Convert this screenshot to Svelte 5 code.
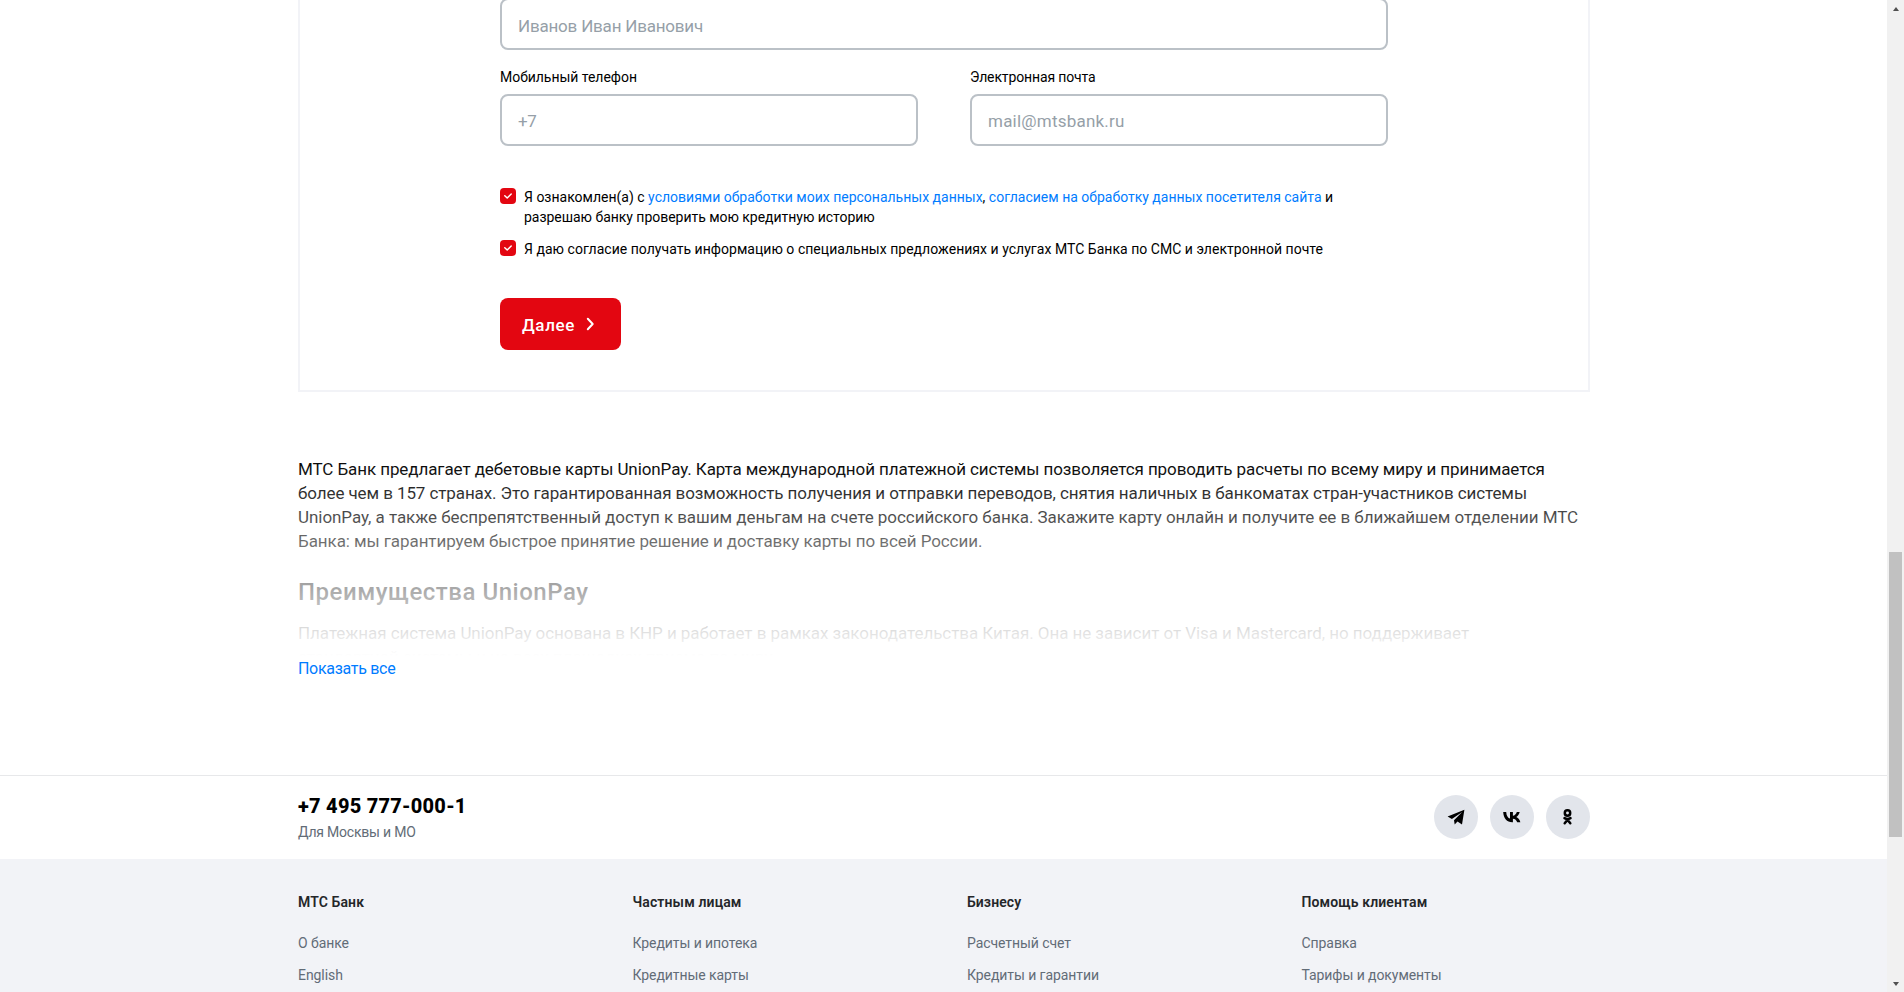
<script>
  const intro = [
    ['МТС Банк предлагает дебетовые карты UnionPay. Карта международной платежной системы позволяется проводить расчеты по всему миру и принимается', -0.087],
    ['более чем в 157 странах. Это гарантированная возможность получения и отправки переводов, снятия наличных в банкоматах стран-участников системы', -0.095],
    ['UnionPay, а также беспрепятственный доступ к вашим деньгам на счете российского банка. Закажите карту онлайн и получите ее в ближайшем отделении МТС', -0.056],
    ['Банка: мы гарантируем быстрое принятие решение и доставку карты по всей России.', -0.078]
  ];
  const details = [
    ['Платежная система UnionPay основана в КНР и работает в рамках законодательства Китая. Она не зависит от Visa и Mastercard, но поддерживает', -0.057],
    ['стандартной системы и на всех площадках приема по миру', -0.1]
  ];
  const columns = [
    { title: 'МТС Банк', links: ['О банке', 'English'] },
    { title: 'Частным лицам', links: ['Кредиты и ипотека', 'Кредитные карты'] },
    { title: 'Бизнесу', links: ['Расчетный счет', 'Кредиты и гарантии'] },
    { title: 'Помощь клиентам', links: ['Справка', 'Тарифы и документы'] }
  ];
</script>

{#snippet checkbox()}
  <span class="box">
    <svg width="16" height="16" viewBox="0 0 16 16"><path d="M4.8 7.8 7.2 10 11.2 6" fill="none" stroke="#fff" stroke-width="1.5" stroke-linecap="round" stroke-linejoin="round" /></svg>
  </span>
{/snippet}

<div class="window">
  <div class="page">
    <form class="card">
      <input class="name" placeholder="Иванов Иван Иванович" />
      <div class="pair">
        <label><span class="cap phone-cap">Мобильный телефон</span><input class="phone" placeholder="+7" /></label>
        <label><span class="cap mail-cap">Электронная почта</span><input class="mail" placeholder="mail@mtsbank.ru" /></label>
      </div>
      <div class="checks">
        <div class="check">
          {@render checkbox()}
          <p>Я ознакомлен(а) с <a href="#terms">условиями обработки моих персональных данных</a>, <a href="#visitor">согласием на обработку данных посетителя сайта</a> и<br /><span class="tight">разрешаю банку проверить мою кредитную историю</span></p>
        </div>
        <div class="check">
          {@render checkbox()}
          <p class="wide">Я даю согласие получать информацию о специальных предложениях и услугах МТС Банка по СМС и электронной почте</p>
        </div>
      </div>
      <button type="button">
        <span>Далее</span>
        <svg width="9" height="14" viewBox="0 0 9 14"><path d="M1.8 1.8 6.7 7 1.8 12.2" fill="none" stroke="#fff" stroke-width="2" stroke-linecap="round" stroke-linejoin="round" /></svg>
      </button>
    </form>

    <section class="seo">
      <div class="fade">
        <p>{#each intro as [line, spacing]}<span class="line" style="letter-spacing: {spacing}px">{line}</span>{/each}</p>
        <h2>Преимущества UnionPay</h2>
        <p>{#each details as [line, spacing]}<span class="line" style="letter-spacing: {spacing}px">{line}</span>{/each}</p>
      </div>
      <a class="more" href="#all">Показать все</a>
    </section>

    <div class="contacts">
      <div class="inner">
        <div>
          <div class="tel">+7 495 777-000-1</div>
          <div class="region">Для Москвы и МО</div>
        </div>
        <div class="social">
          <a href="#telegram" aria-label="Telegram"><svg width="44" height="44" viewBox="0 0 44 44"><path d="M13.6 21.6 30.4 14.7 28 29.5 23.5 26.6 20.7 29.6 20 25.3 28.2 17 17.9 24.1Z" /></svg></a>
          <a href="#vk" aria-label="VK"><svg width="44" height="44" viewBox="0 0 44 44"><path d="M22.3 27.2C16.8 27.2 13.5 23.3 13.2 17H16.2C16.4 21 18.1 23.1 20 23.6V17H22.9V20.8C24.6 20.6 26.2 19 26.8 17H29.7C29.3 19.3 27.7 21.1 26.3 22 27.9 22.7 29.6 24.3 30.4 27.2H27.2C26.6 25.3 25 23.9 22.9 23.7V27.2Z" /></svg></a>
          <a href="#ok" aria-label="OK"><svg width="44" height="44" viewBox="0 0 44 44"><g fill="none" stroke="#000" stroke-width="2.5" stroke-linecap="round" stroke-linejoin="round"><circle cx="21.5" cy="18" r="2.7" /><path d="M18.5 23.1Q21.5 24.9 24.5 23.1M21.5 24.9 18.7 28.3M21.5 24.9 24.3 28.3" /></g></svg></a>
        </div>
      </div>
    </div>

    <footer>
      <nav>
        {#each columns as col}
          <div class="col">
            <h3>{col.title}</h3>
            {#each col.links as link}<a href="#link">{link}</a>{/each}
          </div>
        {/each}
      </nav>
    </footer>
  </div>

  <div class="scrollbar">
    <i class="arrow up"></i>
    <div class="track"><div class="thumb"></div></div>
    <i class="arrow down"></i>
  </div>
</div>

<style>
  :global(body) { margin: 0; overflow: hidden; }
  .window { display: flex; width: 1904px; height: 992px; overflow: hidden; background: #fff; color: #000; font-family: Roboto, 'Liberation Sans', sans-serif; }
  .window * { box-sizing: border-box; }
  a { color: #007cff; text-decoration: none; }
  p, h2, h3 { margin: 0; }
  .page { width: 1887px; height: 992px; overflow: hidden; }
  .card { width: 1292px; height: 394px; margin: -2px 0 0 298px; padding: 0 200px; border: 2px solid #f2f3f7; border-top: 0; }
  input { display: block; width: 100%; height: 52px; padding: 3px 16px 0; border: 2px solid #bbc1c7; border-radius: 8px; background: #fff; font: 17px Roboto, sans-serif; outline: none; }
  input::placeholder { color: #969fa8; opacity: 1; }
  .name { letter-spacing: -0.2px; }
  .phone, .mail { padding-top: 1px; }
  .phone { letter-spacing: -0.5px; }
  .mail { letter-spacing: 0.22px; }
  .pair { display: grid; grid-template-columns: 418px 418px; gap: 52px; margin-top: 17px; }
  .cap { display: block; height: 27px; font-size: 14px; line-height: 20px; }
  .phone-cap { letter-spacing: -0.03px; }
  .mail-cap { letter-spacing: -0.13px; }
  .checks { margin-top: 41px; }
  .check { display: flex; gap: 8px; margin-bottom: 12px; font-size: 14px; line-height: 20px; white-space: nowrap; }
  .box { width: 16px; height: 16px; margin-top: 1px; border-radius: 4px; background: #e30611; }
  .box svg { display: block; }
  .tight { letter-spacing: -0.03px; }
  .wide { letter-spacing: 0.03px; }
  button { display: flex; align-items: center; gap: 11px; width: 121px; height: 52px; margin-top: 39px; padding: 0 0 0 22px; border: 0; border-radius: 8px; background: #e30611; color: #fff; font: 500 17px Roboto, sans-serif; letter-spacing: 0.64px; }
  button span { padding-top: 2px; }
  .seo { width: 1292px; margin: 64px 0 0 298px; }
  .fade { position: relative; height: 200px; padding-top: 1px; overflow: hidden; font-size: 17px; line-height: 24px; white-space: nowrap; }
  .fade::after { content: ''; position: absolute; inset: 0; background: linear-gradient(rgba(255, 255, 255, 0), #fff); }
  .line { display: block; }
  h2 { margin: 25px 0 15px; font-size: 24px; line-height: 28px; font-weight: 500; letter-spacing: 0.53px; }
  .more { display: block; height: 24px; font-size: 16px; line-height: 24px; padding-top: 1px; letter-spacing: -0.3px; }
  .contacts { margin-top: 95px; height: 84px; border-top: 1px solid #e7e8ea; }
  .inner { display: flex; justify-content: space-between; width: 1292px; margin-left: 298px; padding-top: 19px; }
  .tel { margin-top: -1px; font-size: 20px; line-height: 24px; font-weight: 800; letter-spacing: 0.26px; }
  .region { margin-top: 4px; font-size: 14px; line-height: 20px; letter-spacing: -0.21px; color: #626c77; }
  .social { display: flex; gap: 12px; }
  .social a { width: 44px; height: 44px; border-radius: 50%; background: #e2e5eb; }
  .social svg { display: block; fill: #000; }
  footer { height: 133px; padding: 33px 0 0 298px; background: #f2f3f7; }
  nav { display: grid; grid-template-columns: repeat(4, 334.5px); }
  h3 { height: 41px; color: #242629; font-size: 14px; line-height: 20px; font-weight: 600; letter-spacing: 0.12px; }
  .col a { display: block; height: 32px; color: #626c77; font-size: 14px; line-height: 20px; letter-spacing: -0.07px; }
  .scrollbar { display: flex; flex-direction: column; align-items: center; width: 17px; height: 992px; background: #f1f1f1; }
  .track { flex: 1; width: 13px; padding-top: 535px; }
  .thumb { height: 285px; background: #c1c1c1; }
  .arrow { height: 17px; display: flex; align-items: center; }
  .arrow::before { content: ''; border: 3.5px solid transparent; }
  .up::before { border-top: 0; border-bottom: 4px solid #505050; }
  .down::before { border-bottom: 0; border-top: 4px solid #505050; }
</style>
